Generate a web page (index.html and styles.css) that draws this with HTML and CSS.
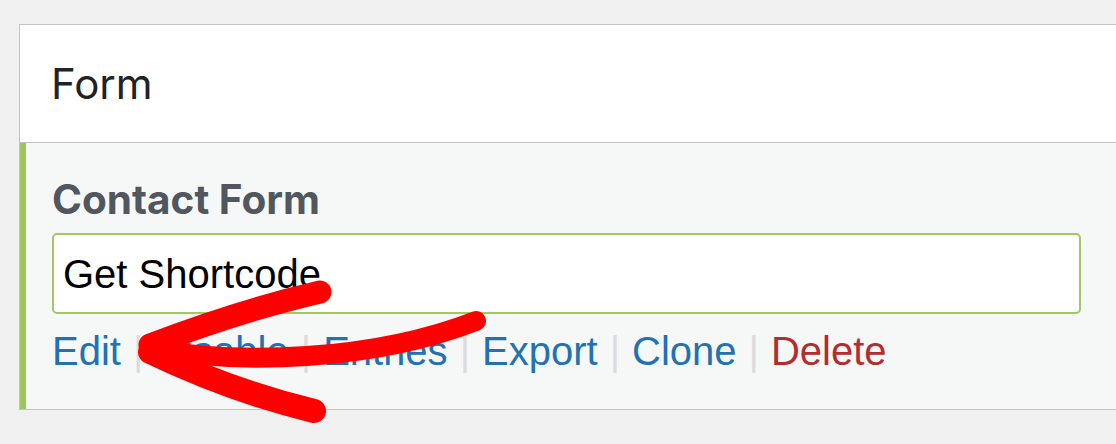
FILE: index.html
```html
<!DOCTYPE html>
<html>
<head>
<meta charset="utf-8">
<link rel="stylesheet" href="styles.css">
</head>
<body>
<div class="panel">
  <div class="panel-header">Form</div>
  <div class="form-row">
    <h3 class="form-title">Contact Form</h3>
    <div class="shortcode-box">Get Shortcode</div>
    <div class="row-actions">
      <a class="act">Edit</a><span class="sep">|</span><a class="act">Disable</a><span class="sep">|</span><a class="act">Entries</a><span class="sep">|</span><a class="act">Export</a><span class="sep">|</span><a class="act">Clone</a><span class="sep">|</span><a class="act delete">Delete</a>
    </div>
    <svg class="arrow" width="400" height="160" viewBox="120 270 400 160" xmlns="http://www.w3.org/2000/svg">
      <g fill="none" stroke="#ff0000" stroke-linecap="round" stroke-linejoin="round">
        <path d="M150 345 C 200 326, 260 306, 320 292" stroke-width="23"/>
        <path d="M150 349 C 240 364, 370 362, 476 321" stroke-width="20"/>
        <path d="M150 352 C 200 376, 260 398, 314 411" stroke-width="24"/>
      </g>
    </svg>
  </div>
</div>
</body>
</html>
```
FILE: styles.css
```css
html, body {
  margin: 0;
  padding: 0;
}
body {
  background: #f0f0f1;
  width: 1116px;
  height: 444px;
  overflow: hidden;
}
.panel {
  margin: 24px 0 0 19px;
  border: 1px solid #c3c4c7;
  border-right: none;
  background: #fff;
}
.panel-header {
  height: 117px;
  line-height: 117px;
  padding-left: 31px;
  font-family: "Inter", "Liberation Sans", sans-serif;
  font-size: 42px;
  color: #1d2327;
  border-bottom: 1px solid #c3c4c7;
  background: #fff;
}
.form-row {
  position: relative;
  background: #f6f7f7;
  border-left: 6px solid #9dc55a;
  padding: 33px 35px 35px 26px;
}
.form-title {
  margin: 0;
  font-family: "Inter", "Liberation Sans", sans-serif;
  font-weight: 700;
  font-size: 40.5px;
  line-height: 48px;
  color: #50575e;
}
.shortcode-box {
  margin-top: 9px;
  width: 1029px;
  box-sizing: border-box;
  height: 81px;
  border: 2px solid #a3c766;
  border-radius: 5px;
  background: #fff;
  padding: 17px 9px 0;
  font-family: "Liberation Sans", Arial, sans-serif;
  font-size: 40px;
  line-height: 44px;
  color: #000;
}
.row-actions {
  margin-top: 15px;
  font-family: "Liberation Sans", Arial, sans-serif;
  font-size: 40px;
  line-height: 45px;
  white-space: nowrap;
}
.act {
  color: #2271b1;
  text-decoration: none;
}
.act.delete {
  color: #b32d2e;
}
.sep {
  color: #dcdcde;
  margin: 0 12px;
}
.arrow {
  position: absolute;
  left: 94px;
  top: 127px;
  pointer-events: none;
}
```
